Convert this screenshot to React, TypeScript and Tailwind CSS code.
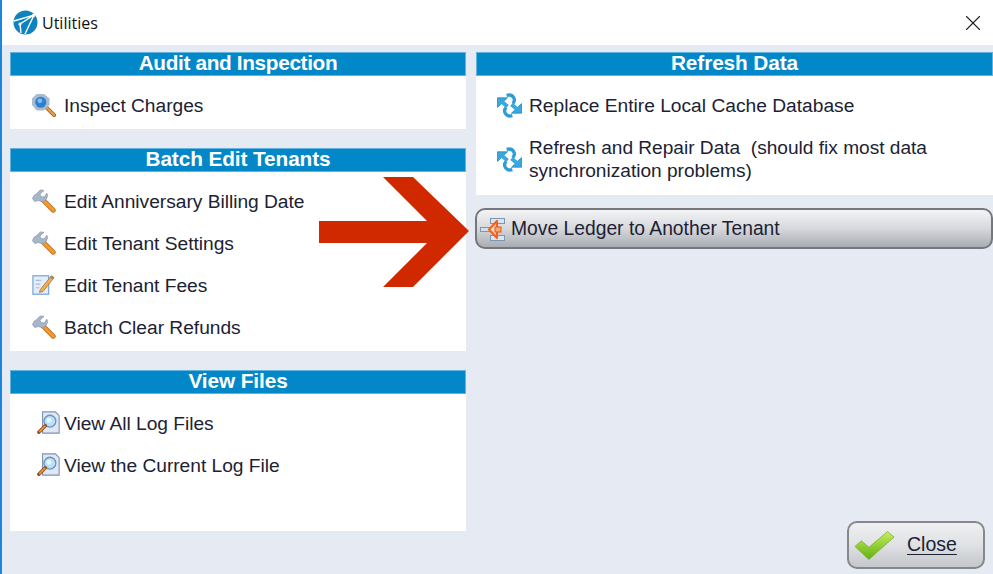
import React from 'react';
import { X } from 'lucide-react';

function LogoIcon() {
  return (
    <svg width="25" height="25" viewBox="0 0 25 25" className="shrink-0">
      <circle cx="12.5" cy="12.5" r="12" fill="#0f83bd" />
      <path d="M0.8 11 L21 5 L12 24 M7 14 L8 23 M7 14 L21 5" fill="none" stroke="#fff" strokeWidth="1.4" />
      <circle cx="7" cy="14" r="1.6" fill="#fff" />
      <circle cx="20.5" cy="5.5" r="1.8" fill="#fff" />
    </svg>
  );
}

function MagnifierIcon() {
  return (
    <svg width="24" height="24" viewBox="0 0 26 26">
      <path d="M16 16 L24 24" stroke="#a8682a" strokeWidth="4.2" strokeLinecap="round" />
      <path d="M16.5 16.5 L24 24" stroke="#eda24a" strokeWidth="2.2" strokeLinecap="round" />
      <path d="M5 1 H13 L19 6 V13 L13 19 H5 L0 13 V6 Z" fill="#a9bbd0" />
      <circle cx="9.5" cy="10" r="6" fill="#2f7fd0" />
      <circle cx="8.5" cy="8.5" r="2.6" fill="#7cc0ee" />
    </svg>
  );
}

function WrenchIcon() {
  return (
    <svg width="24" height="24" viewBox="0 0 26 26">
      <path d="M12 12 L23 23" stroke="#c0752a" strokeWidth="5.4" strokeLinecap="round" />
      <path d="M12 12 L23 23" stroke="#f5992f" strokeWidth="3.4" strokeLinecap="round" />
      <path d="M9 1 L13 1.5 L8.5 5.5 L10 8.5 L13.5 8.5 L16 4.5 L17 7 L15.5 11 L12 14 L7 12.5 L3 13.5 L0.5 10.5 L2 7 L5 5 Z" fill="#a7b6cb" stroke="#7f90a8" strokeWidth="0.7" />
    </svg>
  );
}

function NoteIcon() {
  return (
    <svg width="24" height="24" viewBox="0 0 26 26">
      <rect x="1" y="3" width="17" height="20" fill="#e3eefa" stroke="#7ea9d8" strokeWidth="1.4" />
      <path d="M4 8 H10 M4 12 H9 M4 16 H8" stroke="#a8bdd6" strokeWidth="1.2" />
      <path d="M9 18 L21 3 L24 5 L12 20 L8 21 Z" fill="#f0b050" stroke="#a8682a" strokeWidth="0.8" />
      <path d="M20 4 L23 6" stroke="#7b8aa0" strokeWidth="1.8" />
    </svg>
  );
}

function LogFileIcon() {
  return (
    <svg width="24" height="24" viewBox="0 0 26 26">
      <path d="M6 1 H20 L24 5 V24 H6 Z" fill="#dfe7f4" stroke="#7f93b4" strokeWidth="1.2" />
      <circle cx="14" cy="11" r="6.4" fill="#b9e2f8" stroke="#6f93b7" strokeWidth="1.4" />
      <circle cx="13" cy="10" r="2.6" fill="#e8f7ff" />
      <path d="M9 16 L2 23" stroke="#8a4f1e" strokeWidth="3.6" strokeLinecap="round" />
      <path d="M8.5 16.5 L3 22" stroke="#e99a45" strokeWidth="1.8" strokeLinecap="round" />
    </svg>
  );
}

function SyncIcon() {
  return (
    <svg width="25" height="25" viewBox="0 0 26 26">
      <path d="M0.5 5 L11 5 L0.5 15 Z" fill="#3aa7de" stroke="#1c88bb" strokeWidth="0.8" strokeLinejoin="round" />
      <path d="M25.5 21 L15 21 L25.5 11 Z" fill="#3aa7de" stroke="#1c88bb" strokeWidth="0.8" strokeLinejoin="round" />
      <path d="M5 9 L11 14 M21 17 L15 12" stroke="#3aa7de" strokeWidth="4" />
      <path d="M10 2.5 C17 0.5 20 7 16.5 11 M16 23.5 C9 25.5 6 19 9.5 15" fill="none" stroke="#2f9dd3" strokeWidth="3.4" />
    </svg>
  );
}

function MoveIcon() {
  return (
    <svg width="26" height="26" viewBox="0 0 26 26">
      <rect x="0.5" y="11.5" width="10" height="4" fill="#d3deeb" stroke="#7f96b3" />
      <rect x="10.5" y="2.5" width="14" height="5" fill="#dbe5f1" stroke="#7f96b3" />
      <rect x="10.5" y="19.5" width="14" height="5" fill="#dbe5f1" stroke="#7f96b3" />
      <path d="M9 13.5 L17 5 V22 Z" fill="#fbd9bf" stroke="#ee6420" strokeWidth="2.2" strokeLinejoin="round" />
      <rect x="15" y="11" width="6" height="5" fill="#f8a76d" stroke="#e2571b" />
    </svg>
  );
}

function CheckIcon() {
  return (
    <svg width="41" height="31" viewBox="0 0 44 32">
      <defs>
        <linearGradient id="chk" x1="0" y1="0" x2="0" y2="1">
          <stop offset="0" stopColor="#c8ee5c" />
          <stop offset="1" stopColor="#5fb012" />
        </linearGradient>
      </defs>
      <path d="M1 17 L8 11 L16 18 L36 1 L43 7 L16 31 Z" fill="url(#chk)" stroke="#7fae2a" strokeWidth="0.8" strokeLinejoin="round" />
    </svg>
  );
}

function Panel({ title, className, titleClass, children }: { title: string; className?: string; titleClass?: string; children: React.ReactNode }) {
  return (
    <section className={`bg-white flex flex-col ${className ?? ''}`}>
      <h2 className={`h-6 bg-[#0288c9] border border-[#62b3dd] text-white text-center font-bold text-[20.8px] leading-[20px] ${titleClass ?? 'tracking-[-0.1px]'}`}>
        {title}
      </h2>
      <div className="pt-2 flex flex-col flex-1">{children}</div>
    </section>
  );
}

function Row({ icon, label, tight }: { icon: React.ReactNode; label: string; tight?: boolean }) {
  return (
    <div className={`h-[42px] flex items-center text-[19.2px] tracking-[-0.02px] text-[#1c2233] ${tight ? 'pl-[27px] gap-[3px]' : 'pl-[22px] gap-[8px]'}`}>
      <span className="w-6 flex justify-center shrink-0">{icon}</span>
      <span className="pt-[2px]">{label}</span>
    </div>
  );
}

export default function App() {
  return (
    <div className="relative w-[993px] h-[574px] overflow-hidden flex flex-col border-l-2 border-[#1a87dd] bg-[#e6ebf3] font-['Liberation_Sans',Arial,sans-serif]">
      <header className="h-[45px] bg-white flex items-center pl-[11px] pr-[7px] shrink-0">
        <LogoIcon />
        <span className="ml-[4px] text-[16px] text-[#111] font-['Open_Sans',sans-serif]">Utilities</span>
        <X size={26} strokeWidth={1} className="ml-auto text-[#222]" />
      </header>

      <main className="flex-1 flex pt-[7px] pl-[8px] gap-[10px]">
        <div className="w-[456px] flex flex-col gap-[19px] pb-[43px]">
          <Panel title="Audit and Inspection" titleClass="tracking-[-0.35px]" className="h-[77px]">
            <Row icon={<MagnifierIcon />} label="Inspect Charges" />
          </Panel>
          <Panel title="Batch Edit Tenants" className="h-[203px]">
            <Row icon={<WrenchIcon />} label="Edit Anniversary Billing Date" />
            <Row icon={<WrenchIcon />} label="Edit Tenant Settings" />
            <Row icon={<NoteIcon />} label="Edit Tenant Fees" />
            <Row icon={<WrenchIcon />} label="Batch Clear Refunds" />
          </Panel>
          <Panel title="View Files" className="flex-1">
            <Row tight icon={<LogFileIcon />} label="View All Log Files" />
            <Row tight icon={<LogFileIcon />} label="View the Current Log File" />
          </Panel>
        </div>

        <div className="w-[517px] flex flex-col">
          <Panel title="Refresh Data" className="h-[143px]">
            <div className="h-[42px] flex items-center pl-[21px] gap-[7px] text-[19.2px] text-[#1c2233]">
              <SyncIcon />
              <span className="pt-[2px]">Replace Entire Local Cache Database</span>
            </div>
            <div className="flex items-center pl-[21px] gap-[7px] mt-[10px] text-[19.1px] leading-[23px] text-[#1c2233]">
              <span className="shrink-0">
                <SyncIcon />
              </span>
              <span className="w-[450px]">
                Refresh and Repair Data&nbsp; (should fix most data synchronization problems)
              </span>
            </div>
          </Panel>

          <button className="mt-[13px] -ml-px h-[41px] w-[518px] flex items-center pl-[3px] gap-[5px] rounded-[10px] border-2 border-[#74787d] bg-gradient-to-b from-[#f4f4f6] via-[#d6d8dc] to-[#a9adb3] text-[19.3px] text-[#1c2233]">
            <MoveIcon />
            <span className="pt-[2px]">Move Ledger to Another Tenant</span>
          </button>

          <div className="mt-auto mb-[5px] mr-[8px] flex justify-end">
            <button className="w-[138px] h-[48px] flex items-center pl-[5px] gap-[12px] rounded-[10px] border-2 border-[#85888c] bg-gradient-to-b from-[#f0f0f2] via-[#dfe1e4] to-[#c4c7cb] text-[19.5px] text-[#1c2233]">
              <CheckIcon />
              <span className="underline underline-offset-[3px]">Close</span>
            </button>
          </div>
        </div>
      </main>

      {/* red callout arrow drawn over the panels */}
      <svg className="absolute left-[315px] top-[175px]" width="154" height="114" viewBox="0 0 154 114">
        <path d="M2 46 H110 L66 2 H96 L152 56 L96 112 H66 L110 68 H2 Z" fill="#d02900" />
      </svg>
    </div>
  );
}
